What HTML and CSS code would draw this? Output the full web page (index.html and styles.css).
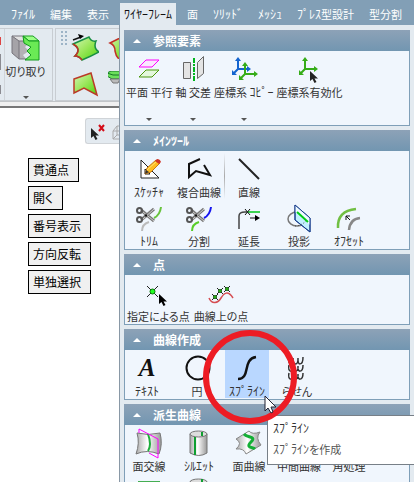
FILE: index.html
```html
<!DOCTYPE html>
<html lang="ja">
<head>
<meta charset="utf-8">
<meta name="viewport" content="width=device-width, initial-scale=1">
<title>ワイヤーフレーム</title>
<link rel="stylesheet" href="styles.css">
</head>
<body>
<svg class="defs" aria-hidden="true">
  <defs>
    <linearGradient id="green" x1="0" y1="0" x2="1" y2="1"><stop offset="0" stop-color="#d5f5b8"/><stop offset=".45" stop-color="#a0e862"/><stop offset="1" stop-color="#4fd40c"/></linearGradient>
    <linearGradient id="metal"><stop offset="0" stop-color="#aaa"/><stop offset=".45" stop-color="#fff"/><stop offset="1" stop-color="#999"/></linearGradient>
    <g id="scissors">
      <path d="M6 4 19 15M6 14 19 3" stroke="#777" stroke-width="3"/>
      <path d="M8 6 19 15M8 13 19 3" stroke="#ccc" stroke-width="1"/>
      <circle cx="4.500" cy="4.500" r="2.500" fill="none" stroke="#555" stroke-width="2"/>
      <circle cx="4.500" cy="13.500" r="2.500" fill="none" stroke="#555" stroke-width="2"/>
      <circle cx="11" cy="9.500" r="1.200" fill="#111"/>
    </g>
    <g id="axes">
      <path d="M7 3V12H17M7 12 2 17" fill="none" stroke="currentColor" stroke-width="2"/>
      <path d="M4 4 7 0 10 4ZM16 9 20 12 16 15ZM1 13V18H6Z" fill="currentColor"/>
    </g>
    <path id="pointer" d="M0 0V10L2.500 8 4.500 12 6.500 11 4.500 7.500H8Z"/>
  </defs>
</svg>

<nav class="tabs">
  <button><span class="kana">ﾌｧｲﾙ</span></button>
  <button>編集</button>
  <button>表示</button>
  <button class="current"><span class="kana">ﾜｲﾔｰﾌﾚｰﾑ</span></button>
  <button>面</button>
  <button><span class="kana">ｿﾘｯﾄﾞ</span></button>
  <button><span class="kana">ﾒｯｼｭ</span></button>
  <button><span class="kana">ﾌﾟﾚｽ</span>型設計</button>
  <button>型分割</button>
</nav>

<main class="workspace">
  <div class="left">
    <div class="ribbon">
      <div class="group cut-group">
        <div class="edge"><i class="red"></i><i></i><i class="short"></i></div>
        <button class="cut">
          <svg width="30" height="28" viewBox="0 0 30 28">
            <path d="M1 2H12L16 6 17 10 14 13 18 17 12 21 15 25H9L1 19Z" fill="#b4b1b6"/>
            <path d="M1 2H12L17 7H8Z" fill="#e2e2e2"/>
            <path d="M1 2 8 7V25L1 19Z" fill="#a5a3a8"/>
            <path d="M12 2H1V19L8 25H15M1 2 8 7H13M8 7V25" fill="none" stroke="#77757c"/>
            <path d="M12 2H22L28 7H18Z" fill="#9cff87" stroke="#1b9c24"/>
            <path d="M12 2 18 7H28V26H14L20 21 16 17 20 13 13 9Z" fill="#6aea55" stroke="#129a1e"/>
          </svg>
          <span>切り取り</span>
          <span class="drop"></span>
        </button>
      </div>
      <div class="group face-group">
        <span class="grip"></span>
        <button aria-label="面を移動"><svg width="28" height="28" viewBox="0 0 28 28"><path d="M2 10 18 3Q20 8 25 7Q22 14 28 18Q21 22 11 26Q8 22 4 22Q11 15 2 10Z" fill="url(#green)" stroke="#198f44" stroke-width="1.500"/><path d="M11 26Q8 22 4 22Q11 15 2 10" fill="none" stroke="#c23126" stroke-width="1.500"/><path d="M2 6 10 3" stroke="#111" stroke-width="1.500"/><path d="M7 0 13 2 9 5Z"/></svg></button>
        <button aria-label="面"><svg width="28" height="28" viewBox="0 0 28 28"><path d="M2 9 10 5 18 2V26L10 24Q8 22 7 17Q7 11 2 9Z" fill="url(#green)" stroke="#c23126" stroke-width="1.500"/></svg></button>
        <button aria-label="平らな面"><svg width="28" height="28" viewBox="0 0 28 28"><path d="M3 8 20 2 26 24 13 17 3 22Z" fill="url(#green)" stroke="#ba3a27" stroke-width="1.500"/></svg></button>
        <button aria-label="押し出し"><svg width="28" height="28" viewBox="0 0 28 28"><path d="M-1 2 3 0H18V8H4L-1 5Z" fill="#6be05b" stroke="#177729"/><path d="M-1 2 5 4H18" fill="none" stroke="#177729"/><path d="M2 8H12L10 12H5Z" fill="#bbb" stroke="#777"/></svg></button>
      </div>
    </div>
    <div class="canvas">
      <div class="floating">
        <svg width="34" height="24" viewBox="0 0 34 24"><use href="#pointer" x="5" y="9" fill="#222"/><path d="M13 6 18 12M18 6 13 12" stroke="#d40c18" stroke-width="2"/><path d="M27 12 31 7H38M27 12H38M27 12V20H38M31 7V16L27 20M31 16H38" fill="none" stroke="#aaa"/></svg>
      </div>
      <div class="options">
        <button>貫通点</button>
        <button>開く</button>
        <button>番号表示</button>
        <button>方向反転</button>
        <button>単独選択</button>
      </div>
    </div>
  </div>

  <div class="panel">
    <section class="reference">
      <h2><button aria-expanded="true">参照要素</button></h2>
      <div class="tools flow">
        <button><svg viewBox="0 0 28 28"><path d="M4 12 11 5H24L17 12Z" fill="#fbe6ff" stroke="#f0f"/><path d="M4 22 11 15H24L17 22Z" fill="#e4f8dc" stroke="#4b990c"/></svg><span>平面 平行</span><i class="drop"></i></button>
        <button><svg viewBox="0 0 28 28"><path d="M4.500 7.500H11.500V23.500H4.500ZM18.500 7.500 24.500 1.500V18.500L18.500 23.500Z" fill="#e4e4e4" stroke="#666"/><path d="M15 3V27" stroke="#00b51d" stroke-width="2" stroke-dasharray="5 1 2 1"/></svg><span>軸 交差</span><i class="drop"></i></button>
        <button><svg viewBox="0 0 28 28"><g color="#1464cf"><use href="#axes" x="1" y="2"/></g><g color="#36ac18"><use href="#axes" x="8" y="7"/></g></svg><span>座標系 <span class="kana">ｺﾋﾟｰ</span></span><i class="drop"></i></button>
        <button><svg viewBox="0 0 28 28"><g color="#36ac18"><use href="#axes" x="3" y="2"/></g><use href="#pointer" x="15" y="16" fill="#222"/></svg><span>座標系有効化</span></button>
      </div>
    </section>

    <section>
      <h2><button aria-expanded="true">ﾒｲﾝﾂｰﾙ</button></h2>
      <div class="tools">
        <button><svg viewBox="0 0 28 28"><path d="M6 5V23H24Z M10 14V19H15Z" fill="#fff" fill-rule="evenodd" stroke="#222"/><path d="M10 19 12 13 21 5 25 8 16 17Z" fill="#ffbd20" stroke="#c77813"/><path d="M12 15 22 6" stroke="#ffe675"/><path d="M10 19 11 15 14 17Z" fill="#333"/><path d="M20 6 22 4Q25 4 26 7L24 9Z" fill="#cf3427"/></svg><span class="kana">ｽｹｯﾁｬ</span></button>
        <button><svg viewBox="0 0 28 28"><path d="M15 4 4 9V22L11 16 25 20 19 10" fill="none" stroke="#111" stroke-width="2"/></svg><span>複合曲線</span></button>
        <button class="ruled"><svg viewBox="0 0 28 28"><path d="M4 4 24 24" stroke="#222" stroke-width="2"/></svg><span>直線</span></button>
        <button class="row-start"><svg viewBox="0 0 28 28"><use href="#scissors" y="2"/><path d="M26 3Q25 11 19 14" fill="none" stroke="#68c33d" stroke-width="2"/><path d="M14 18Q7 20 7 27" fill="none" stroke="#bbb" stroke-width="2"/></svg><span class="kana">ﾄﾘﾑ</span></button>
        <button><svg viewBox="0 0 28 28"><use href="#scissors" y="2"/><path d="M26 3Q25 11 19 14" fill="none" stroke="#1515ef" stroke-width="2"/><path d="M14 18Q7 20 7 27" fill="none" stroke="#58cd28" stroke-width="2"/></svg><span>分割</span></button>
        <button><svg viewBox="0 0 28 28"><path d="M4 25V12Q4 8 10 8H12" fill="none" stroke="#444" stroke-width="1.500"/><path d="M12 8H25" stroke="#00c91a" stroke-width="1.500"/><path d="M10 5 15 11M15 5 10 11M15 14H23" stroke="#111"/><path d="M20 11 25 14 20 17Z"/></svg><span>延長</span></button>
        <button><svg viewBox="0 0 28 28"><ellipse cx="12" cy="15" rx="9" ry="7" fill="none" stroke="#777" stroke-width="1.500"/><path d="M10 1 25 14V28L10 16Z" fill="#c1efff" stroke="#173d8c"/><path d="M10 1 25 14V21L10 8Z" fill="#eefaff"/><path d="M10 1 25 14V28L10 16Z" fill="none" stroke="#173d8c"/><path d="M12 8 23 18" stroke="#00cd17" stroke-width="2"/><path d="M10 22Q16 22 21 17" fill="none" stroke="#444" stroke-dasharray="1 2"/></svg><span>投影</span></button>
        <button><svg viewBox="0 0 28 28"><path d="M3 24Q2 7 21 5" fill="none" stroke="#71bf43" stroke-width="2.500"/><path d="M14 26Q15 15 25 14" fill="none" stroke="#888" stroke-width="2.500"/><path d="M11 12 15 16M11 16V12H15" fill="none" stroke="#111"/></svg><span class="kana">ｵﾌｾｯﾄ</span></button>
      </div>
    </section>

    <section>
      <h2><button aria-expanded="true">点</button></h2>
      <div class="tools flow points">
        <button><svg viewBox="0 0 28 28"><path d="M3 7 14 18M14 7 3 18" stroke="#222"/><circle cx="8.500" cy="12.500" r="2.500" fill="#2f2" stroke="#087908"/><use href="#pointer" x="15" y="15"/></svg><span>指定による点</span></button>
        <button><svg viewBox="0 0 28 28"><path d="M2 19C5 26 11 24 14 19S21 11 26 19" fill="none" stroke="#d54d52" stroke-width="1.500"/><path d="M5 15 11 21M11 15 5 21M10 9 16 15M16 9 10 15M17 7 23 13M23 7 17 13" stroke="#222"/><g fill="#35c31b" stroke="#176d12"><circle cx="8" cy="18" r="1.500"/><circle cx="13" cy="12" r="1.500"/><circle cx="20" cy="10" r="1.500"/></g></svg><span>曲線上の点</span></button>
      </div>
    </section>

    <section>
      <h2><button aria-expanded="true">曲線作成</button></h2>
      <div class="tools flush">
        <button><b class="letter" aria-hidden="true">A</b><span class="kana">ﾃｷｽﾄ</span></button>
        <button><svg viewBox="0 0 28 28"><circle cx="15" cy="14" r="11.500" fill="none" stroke="#111" stroke-width="2"/></svg><span>円</span></button>
        <button class="active"><svg viewBox="0 0 28 28"><path d="M5 25C18 25 9 5 23 3" fill="none" stroke="#111" stroke-width="2.500"/></svg><span class="kana">ｽﾌﾟﾗｲﾝ</span></button>
        <button><svg viewBox="0 0 28 28"><path d="M6 3C4 12 11 12 10 4M10 4C9 12 16 12 15 4M15 4C14 12 20 12 20 3M6 11C4 19 11 19 10 12M10 12C9 19 16 19 15 12M15 12C14 19 20 19 20 11M6 19C4 27 11 27 10 20M10 20C9 27 16 27 15 20M15 20C14 27 20 27 20 19" fill="none" stroke="#333" stroke-width="1.500"/></svg><span>らせん</span></button>
      </div>
    </section>

    <section>
      <h2><button aria-expanded="true">派生曲線</button></h2>
      <div class="tools">
        <button><svg viewBox="0 0 28 28"><path d="M2 4Q13 7 25 4Q28 15 24 25Q12 20 1 25Q5 14 2 4Z" fill="url(#metal)" stroke="#777"/><path d="M13 5Q17 16 13 22" fill="none" stroke="#1eae3c" stroke-width="2"/><path d="M14 24 23 29V10L4 0V4" fill="none" stroke="#f0f"/></svg><span>面交線</span></button>
        <button><svg viewBox="0 0 28 28"><path d="M5 5V24Q14 29 22 24V5Z" fill="url(#metal)" stroke="#777"/><ellipse cx="13.500" cy="5" rx="8.500" ry="3" fill="#ddd" stroke="#777"/><path d="M10 8V26M17 3V7" stroke="#0f9f31" stroke-width="2"/></svg><span class="kana">ｼﾙｴｯﾄ</span></button>
        <button><svg viewBox="0 0 28 28"><path d="M1 10 14 2Q17 6 25 3Q20 9 26 16L11 25Q9 19 1 20Q8 14 1 10Z" fill="url(#metal)" stroke="#888"/><path d="M9 5C12 9 22 7 16 13S18 18 20 20" fill="none" stroke="#14af35" stroke-width="3"/></svg><span>面曲線</span></button>
        <button><svg viewBox="0 0 28 28"><path d="M3 22Q9 2 25 7" fill="none" stroke="#666" stroke-width="2"/></svg><span>中間曲線</span></button>
        <button><svg viewBox="0 0 28 28"><path d="M4 24V12Q4 5 12 5H24" fill="none" stroke="#666" stroke-width="2"/></svg><span>角処理</span></button>
        <button class="row-start" aria-label="面の境界"><svg viewBox="0 0 28 28"><path d="M3 3H25V25H3Z" fill="#45ae52"/></svg></button>
        <button aria-label="円筒"><svg viewBox="0 0 28 28"><path d="M5 4V25H22V4Z" fill="url(#metal)" stroke="#777"/><ellipse cx="13.500" cy="4" rx="8.500" ry="3" fill="#ddd" stroke="#777"/><path d="M17 1V6" stroke="#0f9f31" stroke-width="2"/></svg></button>
      </div>
    </section>
  </div>
</main>

<div class="tooltip" role="tooltip">
  <strong class="kana">ｽﾌﾟﾗｲﾝ</strong>
  <span><span class="kana">ｽﾌﾟﾗｲﾝ</span>を作成</span>
</div>
<svg class="ring" viewBox="0 0 96 96" aria-hidden="true"><circle cx="48" cy="48" r="44" fill="none" stroke="#ed1c24" stroke-width="6"/></svg>
<svg class="cursor" viewBox="0 0 14 20" aria-hidden="true"><path d="M1 1V16L4 13 7 18 9 17 7 12H12Z" fill="#fff" stroke="#223"/></svg>
</body>
</html>
```
FILE: styles.css
```css
* { box-sizing: border-box; }

body {
  margin: 0;
  height: 100vh;
  overflow: hidden;
  position: relative;
  display: flex;
  flex-direction: column;
  background: #fff;
  color: #333;
  font: 11px/14px "Noto Sans CJK JP", sans-serif;
  font-feature-settings: "palt";
}

button {
  margin: 0;
  padding: 0;
  border: 0;
  background: none;
  color: inherit;
  font: inherit;
  font-feature-settings: inherit;
  white-space: nowrap;
}

svg { display: block; flex: none; }
.defs { position: absolute; width: 0; height: 0; }
.kana { font-size: 12px; font-feature-settings: normal; }

.tabs {
  flex: none;
  display: flex;
  gap: 7px;
  height: 25px;
  padding: 3px 0 0 7px;
  background: #829fb6;
  color: #fff;
}
.tabs button { flex: none; padding: 0 4px; }
.tabs .current { background: #e3eaf0; color: #111; }

.workspace { flex: 1; min-height: 0; display: flex; overflow: hidden; }
.left { flex: none; width: 119px; display: flex; flex-direction: column; overflow: hidden; }

.ribbon {
  flex: none;
  display: flex;
  gap: 2px;
  height: 83px;
  padding: 3px 0 5px;
  background: linear-gradient(#e3eaf0 76px, #c2c5c8 76px, #c2c5c8 77px, #f0f0f0 77px);
  border-bottom: 2px solid #777;
}
.group { flex: none; border: 1px solid #c8cdd2; background: #e3eaf0; }
.cut-group { width: 53px; display: flex; border-left: 0; }
.edge {
  width: 5px;
  display: flex;
  flex-direction: column;
  gap: 9px;
  padding-top: 8px;
  border-right: 1px solid #d0d5da;
}
.edge i { width: 1px; height: 16px; background: #8b8b91; }
.edge .red { height: 8px; background: #d44; }
.edge .short { height: 9px; margin-top: 6px; }
.cut { flex: 1; min-width: 0; display: flex; flex-direction: column; align-items: center; gap: 2px; padding: 5px 6px 0 0; }
.cut .drop { margin-top: 16px; }
.drop { border: 3px solid transparent; border-top: 3px solid #555; border-bottom: 0; }

.face-group {
  width: 100px;
  position: relative;
  display: grid;
  grid-template-columns: 28px 28px;
  grid-auto-rows: 28px;
  gap: 9px;
  padding: 5px 0 0 15px;
}
.grip {
  position: absolute;
  left: 3px;
  top: 2px;
  width: 8px;
  height: 16px;
  background: repeating-conic-gradient(#9db4c7 0 25%, transparent 0 100%) 0 0 / 4px 4px;
}

.canvas { flex: 1; display: flex; flex-direction: column; }
.floating {
  align-self: flex-end;
  width: 34px;
  margin-top: 10px;
  border: 1px solid #d0d4d8;
  border-right: 0;
  border-radius: 3px 0 0 3px;
  background: #e3eaf0;
  overflow: hidden;
}
.options {
  display: flex;
  flex-direction: column;
  align-items: flex-start;
  gap: 4px;
  padding: 14px 0 0 28px;
}
.options button {
  height: 24px;
  padding: 0 9px 0 4px;
  border: 1px solid #000;
  background: #f0f0f0;
  color: #000;
  font-size: 12px;
}

.panel {
  flex: 1;
  min-width: 0;
  display: flex;
  flex-direction: column;
  gap: 4px;
  padding: 5px 4px 0;
  border-left: 1px solid #8998a6;
  background: #e3eaf0;
  overflow: hidden;
}
.panel section { flex: none; }
.panel h2 { margin: 0; font: inherit; }
.panel h2 button {
  display: flex;
  align-items: center;
  gap: 12px;
  width: 100%;
  height: 21px;
  padding-left: 9px;
  background: linear-gradient(#8da2b7, #7296b1);
  color: #fff;
  font-size: 12px;
  font-weight: 700;
  font-feature-settings: normal;
}
.panel h2 button::before {
  content: "";
  border: 4px solid transparent;
  border-bottom-color: #fff;
  border-top: 0;
}

.tools {
  display: grid;
  grid-template-columns: repeat(5, 44px);
  gap: 1px 6px;
  padding: 0 2px 1px;
  border: 1px solid #7f9fb8;
  border-top: 0;
  background: #f0f6fd;
}
.tools button {
  position: relative;
  display: flex;
  flex-direction: column;
  align-items: center;
  gap: 2px;
  padding-top: 4px;
}
.tools svg { width: 28px; height: 28px; overflow: visible; }
.tools .row-start { grid-column-start: 1; }
.tools .active { background: #b9d7ff; }
.tools .ruled::before {
  content: "";
  position: absolute;
  left: -3px;
  top: 2px;
  width: 1px;
  height: 46px;
  background: linear-gradient(transparent, #aaa, transparent);
}
.flush { padding-left: 0; }
.flow { display: flex; gap: 3px; padding-left: 1px; }
.points { gap: 4px; padding-left: 2px; }
.reference .tools { height: 75px; }
.reference .drop { margin-top: 17px; }
.letter { height: 28px; font: italic 700 25px/28px "Liberation Serif", serif; color: #111; }

.tooltip {
  position: absolute;
  left: 267px;
  right: -1px;
  top: 415px;
  display: flex;
  flex-direction: column;
  gap: 7px;
  padding: 5px 5px 8px;
  border: 1px solid #777f87;
  background: #fff;
  color: #555;
}
.tooltip strong { font-weight: 400; color: #333; }
.ring { position: absolute; left: 202px; top: 329px; width: 96px; height: 96px; }
.cursor { position: absolute; left: 264px; top: 395px; width: 14px; height: 20px; }
```
